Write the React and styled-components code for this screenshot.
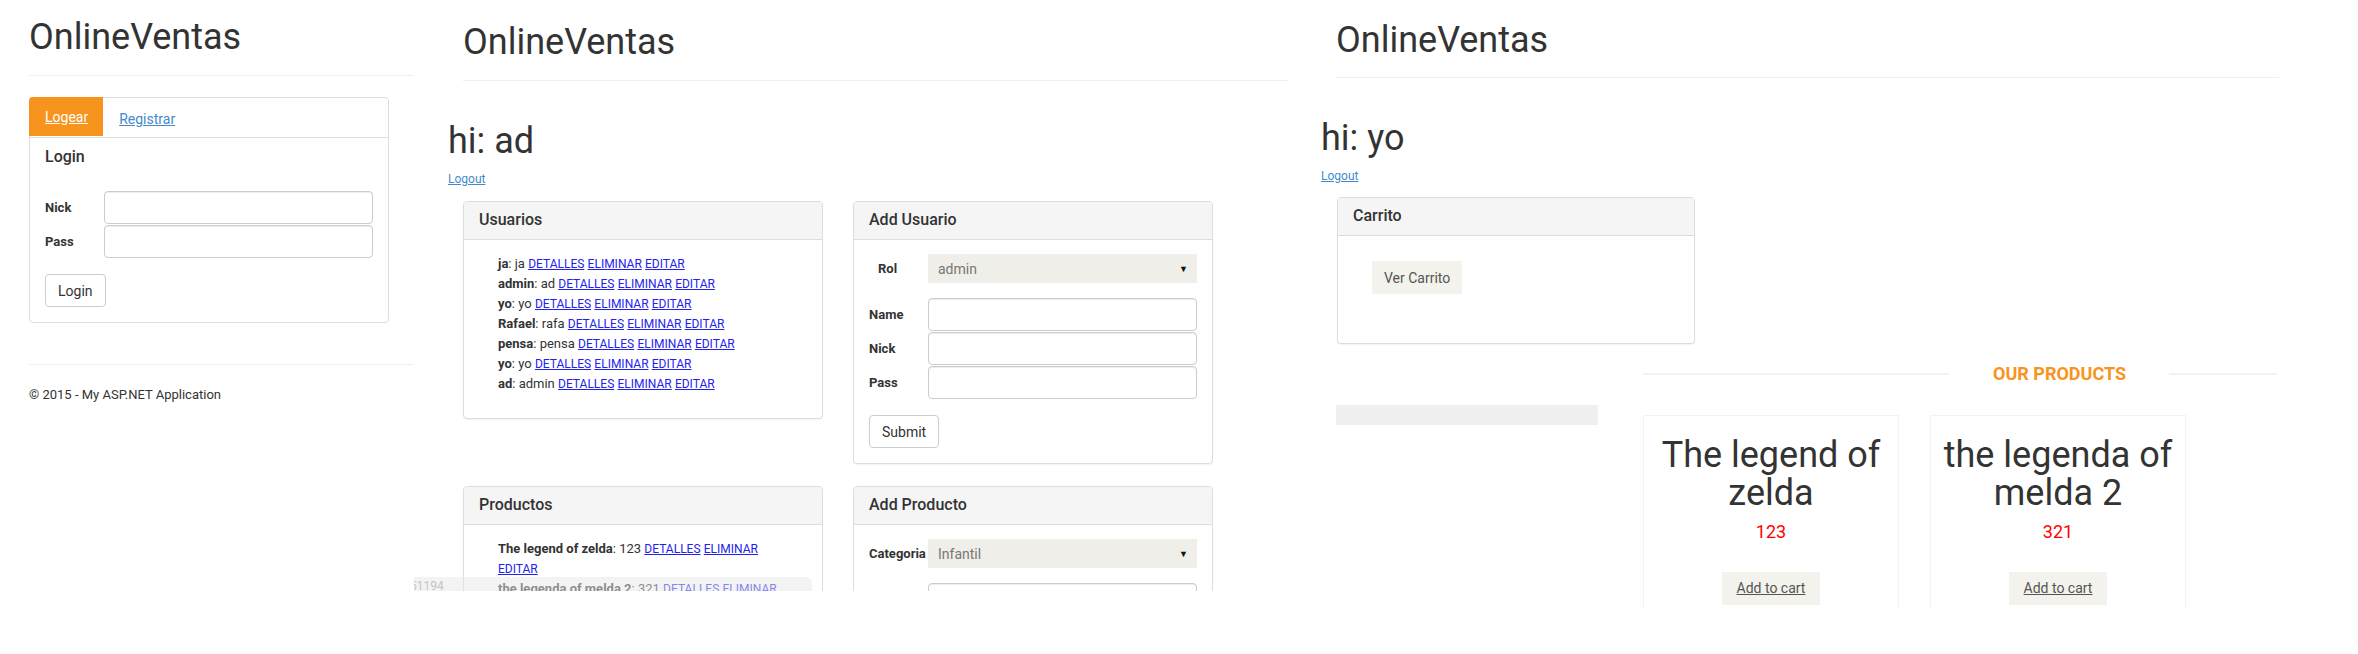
import React from "react";
import styled, { createGlobalStyle } from "styled-components";

const GlobalStyle = createGlobalStyle`
  html, body { margin: 0; padding: 0; background: #fff; }
  body {
    font-family: Roboto, "Helvetica Neue", Arial, sans-serif;
    font-size: 14px;
    color: #333;
  }
  *, *::before, *::after { box-sizing: border-box; }
`;

const ORANGE = "#f7941d";

const Collage = styled.main`
  display: flex;
  align-items: flex-start;
  width: 2358px;
  height: 654px;
  overflow: hidden;
`;

const Shot = styled.section`
  position: relative;
  flex: none;
  width: ${(p) => p.$w}px;
  height: ${(p) => p.$h}px;
  padding-left: ${(p) => p.$pl}px;
  overflow: hidden;
`;

const Masthead = styled.header`
  margin-left: ${(p) => p.$indent || 0}px;
  padding-top: ${(p) => p.$top}px;
  width: ${(p) => p.$w}px;
`;

const Brand = styled.h1`
  margin: 0;
  font-size: 36px;
  line-height: 40px;
  font-weight: 400;
  color: #333;
`;

const Rule = styled.hr`
  margin: ${(p) => p.$gap}px 0 0;
  width: ${(p) => (p.$w ? `${p.$w}px` : "100%")};
  height: 0;
  border: 0;
  border-top: 1px solid #eee;
`;

/* ---------- left: login tabs ---------- */

const TabBox = styled.div`
  margin-top: 21px;
  width: 360px;
  border: 1px solid #ddd;
  border-radius: 4px;
`;

const TabBar = styled.nav`
  display: flex;
  align-items: center;
  height: 40px;
  border-bottom: 1px solid #ddd;
`;

const Tab = styled.a`
  display: flex;
  align-items: center;
  font-size: 14px;
  text-decoration: underline;
  ${(p) =>
    p.$active
      ? `
    align-self: flex-start;
    height: 39px;
    margin: -1px 0 0 -1px;
    padding: 0 15px 0 16px;
    background: ${ORANGE};
    color: #fff;
    border-top-left-radius: 4px;
  `
      : `
    margin-left: 16px;
    padding-top: 2px;
    color: #428bca;
  `}
`;

const TabBody = styled.div`
  padding: 10px 15px 15px;
`;

const FormTitle = styled.h4`
  margin: 0;
  font-size: 16px;
  line-height: 18px;
  font-weight: 500;
  color: #333;
`;

const FieldGrid = styled.div`
  display: grid;
  grid-template-columns: 59px 1fr;
  row-gap: 1px;
  align-items: center;
  margin-top: ${(p) => p.$top}px;
`;

const FieldLabel = styled.label`
  font-size: 13px;
  font-weight: 700;
  color: #333;
  white-space: nowrap;
  padding-left: ${(p) => p.$indent || 0}px;
`;

const TextInput = styled.input`
  display: block;
  width: 100%;
  height: 33px;
  padding: 6px 12px;
  border: 1px solid #ccc;
  border-radius: 4px;
  background: #fff;
  box-shadow: inset 0 1px 1px rgba(0, 0, 0, 0.075);
  font: 14px Roboto, sans-serif;
`;

const SelectBox = styled.div`
  display: flex;
  align-items: center;
  justify-content: space-between;
  height: 29px;
  padding: 0 9px 0 10px;
  background: #efeee9;
  color: #777;
  font-size: 14px;
`;

const Caret = styled.span`
  color: #111;
  font-size: 9px;
`;

const PlainButton = styled.button`
  display: block;
  height: 33px;
  margin-top: 16px;
  padding: 0 12px;
  border: 1px solid #ccc;
  border-radius: 4px;
  background: #fff;
  color: #333;
  font: 14px Roboto, sans-serif;
`;

const FooterNote = styled.footer`
  margin-top: 21px;
  font-size: 13px;
  line-height: 18.6px;
  color: #333;
`;

/* ---------- shared: greeting + panels ---------- */

const Greeting = styled.h2`
  margin: 40px 0 0;
  font-size: 36px;
  line-height: 40px;
  font-weight: 400;
  color: #333;
`;

const LogoutLink = styled.a`
  display: block;
  width: fit-content;
  margin-top: 10px;
  font-size: 12px;
  line-height: 17px;
  color: #428bca;
  text-decoration: underline;
`;

const PanelGrid = styled.div`
  display: grid;
  grid-template-columns: 360px 360px;
  column-gap: 30px;
  row-gap: 22px;
  align-items: start;
  margin: 13px 0 0 15px;
`;

const Panel = styled.div`
  width: ${(p) => (p.$w ? `${p.$w}px` : "auto")};
  margin: ${(p) => p.$margin || "0"};
  border: 1px solid #ddd;
  border-radius: 4px;
  background: #fff;
  box-shadow: 0 1px 1px rgba(0, 0, 0, 0.05);
`;

const PanelHeading = styled.div`
  padding: 9px 15px 10px;
  background: #f5f5f5;
  border-bottom: 1px solid #ddd;
  border-radius: 3px 3px 0 0;
`;

const PanelTitle = styled.h3`
  margin: 0;
  font-size: 16px;
  line-height: 18px;
  font-weight: 500;
  color: #333;
`;

const PanelBody = styled.div`
  padding: ${(p) => p.$pad || "14px 15px 15px"};
`;

const EntryList = styled.ul`
  list-style: none;
  margin: 0 0 10px;
  padding: 0 7px 0 19px;
  font-size: 13px;
  line-height: 20px;
  color: #333;
`;

const EntryName = styled.strong`
  font-weight: 700;
`;

const ActionLink = styled.a`
  font-size: 12px;
  color: #2222ee;
  text-decoration: underline;
`;

const StatusStrip = styled.div`
  position: absolute;
  left: 1px;
  bottom: 0;
  width: 398px;
  height: 14px;
  padding-top: 2px;
  background: rgba(232, 232, 232, 0.5);
  border-top-right-radius: 6px;
  color: #c4c4c4;
  font-size: 12px;
  line-height: 14px;
  text-indent: -4px;
  white-space: nowrap;
  overflow: hidden;
`;

/* ---------- right: shop ---------- */

const SoftButton = styled.button`
  display: inline-block;
  height: 33px;
  padding: 0 12px;
  border: 0;
  background: #f3f2ec;
  color: #555;
  font: 14px Roboto, sans-serif;
`;

const ShopRow = styled.div`
  display: flex;
  align-items: flex-start;
  margin-left: 15px;
`;

const SideWell = styled.aside`
  flex: none;
  width: 262px;
  height: 20px;
  margin-top: 61px;
  background: #f0f0f0;
`;

const Catalog = styled.div`
  flex: none;
  width: 636px;
  margin: 20px 0 0 45px;
`;

const SectionHeading = styled.div`
  display: flex;
  align-items: center;
  height: 20px;
`;

const HeadLine = styled.span`
  flex: none;
  width: ${(p) => p.$w}px;
  height: 2px;
  background: #f2f2f2;
`;

const HeadText = styled.h4`
  margin: 0 43px 0 44px;
  color: ${ORANGE};
  font-size: 18px;
  line-height: 20px;
  font-weight: 700;
  white-space: nowrap;
`;

const CardRow = styled.div`
  display: flex;
  gap: 31px;
  margin-top: 31px;
`;

const ProductCard = styled.article`
  flex: none;
  width: 256px;
  height: 240px;
  padding: 20px 6px 0;
  border: 1px solid #f2f2f2;
  text-align: center;
`;

const ProductName = styled.h1`
  margin: 0;
  font-size: 36px;
  line-height: 38px;
  font-weight: 400;
  color: #333;
`;

const Price = styled.div`
  margin-top: 10px;
  font-size: 18px;
  line-height: 20px;
  color: #ff0000;
`;

const CartButton = styled.a`
  display: inline-block;
  margin-top: 30px;
  height: 33px;
  padding: 0 15px;
  line-height: 33px;
  background: #f3f2ec;
  color: #555;
  font-size: 14px;
  text-decoration: underline;
`;

const users = [
  ["ja", "ja"],
  ["admin", "ad"],
  ["yo", "yo"],
  ["Rafael", "rafa"],
  ["pensa", "pensa"],
  ["yo", "yo"],
  ["ad", "admin"],
];

const products = [
  ["The legend of zelda", "123"],
  ["the legenda of melda 2", "321"],
];

function Entry({ name, value }) {
  return (
    <li>
      <EntryName>{name}</EntryName>: {value} <ActionLink href="#">DETALLES</ActionLink>{" "}
      <ActionLink href="#">ELIMINAR</ActionLink> <ActionLink href="#">EDITAR</ActionLink>
    </li>
  );
}

function Header({ indent, top, width, gap }) {
  return (
    <Masthead $indent={indent} $top={top} $w={width}>
      <Brand>OnlineVentas</Brand>
      <Rule $gap={gap} />
    </Masthead>
  );
}

export default function App() {
  return (
    <>
      <GlobalStyle />
      <Collage>
        {/* login page */}
        <Shot $w={413} $h={654} $pl={29}>
          <Header top={17} width={385} gap={18} />
          <TabBox>
            <TabBar>
              <Tab $active href="#">Logear</Tab>
              <Tab href="#">Registrar</Tab>
            </TabBar>
            <TabBody>
              <FormTitle>Login</FormTitle>
              <FieldGrid $top={25}>
                <FieldLabel>Nick</FieldLabel>
                <TextInput />
                <FieldLabel>Pass</FieldLabel>
                <TextInput type="password" />
              </FieldGrid>
              <PlainButton>Login</PlainButton>
            </TabBody>
          </TabBox>
          <Rule $gap={41} $w={385} />
          <FooterNote>© 2015 - My ASP.NET Application</FooterNote>
        </Shot>

        {/* admin page */}
        <Shot $w={887} $h={591} $pl={35}>
          <Header indent={15} top={22} width={825} gap={18} />
          <Greeting>hi: ad</Greeting>
          <LogoutLink href="#">Logout</LogoutLink>
          <PanelGrid>
            <Panel>
              <PanelHeading>
                <PanelTitle>Usuarios</PanelTitle>
              </PanelHeading>
              <PanelBody $pad="14px 15px 14px">
                <EntryList>
                  {users.map(([n, v], i) => (
                    <Entry key={i} name={n} value={v} />
                  ))}
                </EntryList>
              </PanelBody>
            </Panel>
            <Panel>
              <PanelHeading>
                <PanelTitle>Add Usuario</PanelTitle>
              </PanelHeading>
              <PanelBody>
                <FieldGrid $top={0}>
                  <FieldLabel $indent={9}>Rol</FieldLabel>
                  <SelectBox>
                    admin<Caret>▼</Caret>
                  </SelectBox>
                </FieldGrid>
                <FieldGrid $top={15}>
                  <FieldLabel>Name</FieldLabel>
                  <TextInput />
                  <FieldLabel>Nick</FieldLabel>
                  <TextInput />
                  <FieldLabel>Pass</FieldLabel>
                  <TextInput type="password" />
                </FieldGrid>
                <PlainButton>Submit</PlainButton>
              </PanelBody>
            </Panel>
            <Panel>
              <PanelHeading>
                <PanelTitle>Productos</PanelTitle>
              </PanelHeading>
              <PanelBody $pad="14px 15px 14px">
                <EntryList>
                  {products.map(([n, v], i) => (
                    <Entry key={i} name={n} value={v} />
                  ))}
                </EntryList>
              </PanelBody>
            </Panel>
            <Panel>
              <PanelHeading>
                <PanelTitle>Add Producto</PanelTitle>
              </PanelHeading>
              <PanelBody>
                <FieldGrid $top={0}>
                  <FieldLabel>Categoria</FieldLabel>
                  <SelectBox>
                    Infantil<Caret>▼</Caret>
                  </SelectBox>
                </FieldGrid>
                <FieldGrid $top={15}>
                  <FieldLabel>Name</FieldLabel>
                  <TextInput />
                  <FieldLabel>Precio</FieldLabel>
                  <TextInput />
                </FieldGrid>
              </PanelBody>
            </Panel>
          </PanelGrid>
          <StatusStrip>51194</StatusStrip>
        </Shot>

        {/* shop page */}
        <Shot $w={1058} $h={608} $pl={21}>
          <Header indent={15} top={20} width={943} gap={17} />
          <Greeting>hi: yo</Greeting>
          <LogoutLink href="#">Logout</LogoutLink>
          <Panel $w={358} $margin="12px 0 0 16px">
            <PanelHeading>
              <PanelTitle>Carrito</PanelTitle>
            </PanelHeading>
            <PanelBody $pad="25px 15px 49px 34px">
              <SoftButton>Ver Carrito</SoftButton>
            </PanelBody>
          </Panel>
          <ShopRow>
            <SideWell />
            <Catalog>
              <SectionHeading>
                <HeadLine $w={306} />
                <HeadText>OUR PRODUCTS</HeadText>
                <HeadLine $w={108} />
              </SectionHeading>
              <CardRow>
                {products.map(([n, v]) => (
                  <ProductCard key={n}>
                    <ProductName>{n}</ProductName>
                    <Price>{v}</Price>
                    <CartButton href="#">Add to cart</CartButton>
                  </ProductCard>
                ))}
              </CardRow>
            </Catalog>
          </ShopRow>
        </Shot>
      </Collage>
    </>
  );
}
